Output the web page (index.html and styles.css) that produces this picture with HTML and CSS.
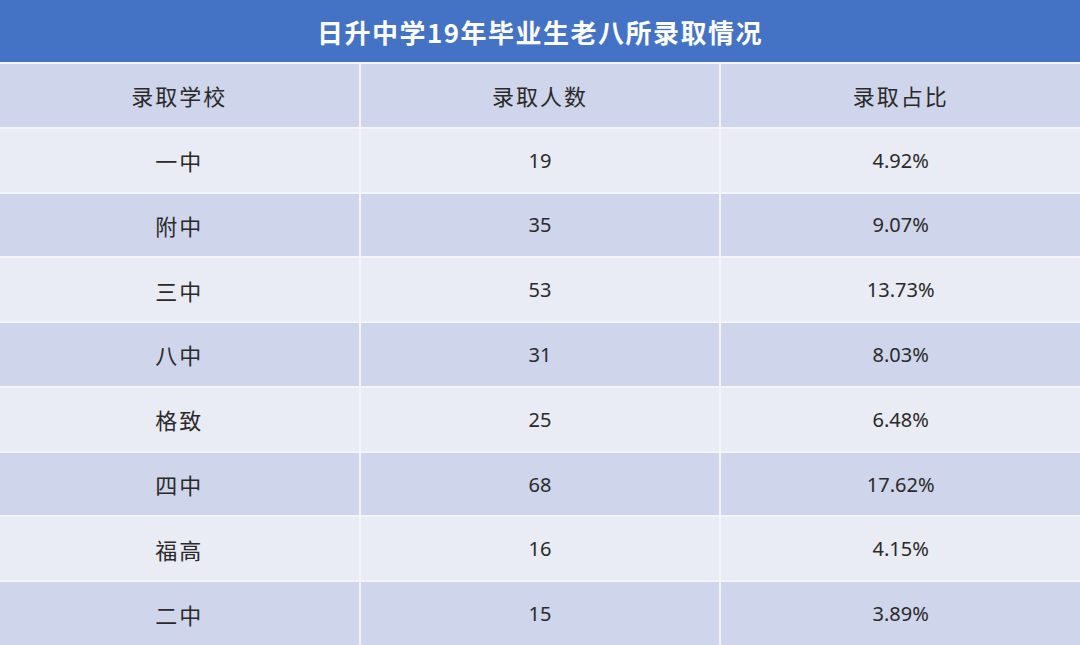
FILE: index.html
```html
<!DOCTYPE html>
<html lang="zh">
<head>
<meta charset="utf-8">
<title>日升中学19年毕业生老八所录取情况</title>
<link rel="stylesheet" href="styles.css">
</head>
<body>
<div class="sheet">
  <div class="title">日升中学19年毕业生老八所录取情况</div>
  <div class="grid">
    <div class="cell head cjk">录取学校</div><div class="cell head cjk">录取人数</div><div class="cell head cjk">录取占比</div>
    <div class="cell light cjk">一中</div><div class="cell light">19</div><div class="cell light">4.92%</div>
    <div class="cell dark cjk">附中</div><div class="cell dark">35</div><div class="cell dark">9.07%</div>
    <div class="cell light cjk">三中</div><div class="cell light">53</div><div class="cell light">13.73%</div>
    <div class="cell dark cjk">八中</div><div class="cell dark">31</div><div class="cell dark">8.03%</div>
    <div class="cell light cjk">格致</div><div class="cell light">25</div><div class="cell light">6.48%</div>
    <div class="cell dark cjk">四中</div><div class="cell dark">68</div><div class="cell dark">17.62%</div>
    <div class="cell light cjk">福高</div><div class="cell light">16</div><div class="cell light">4.15%</div>
    <div class="cell dark cjk">二中</div><div class="cell dark">15</div><div class="cell dark">3.89%</div>
  </div>
</div>
</body>
</html>
```

FILE: styles.css
```css
html, body {
  margin: 0;
  padding: 0;
  background: #ffffff;
}

.sheet {
  width: 1080px;
  height: 645px;
  display: flex;
  flex-direction: column;
  font-family: "Noto Sans", "Noto Sans CJK SC", sans-serif;
  color: #2a2a2a;
}

.title {
  height: 62px;
  flex: none;
  background: #4472c4;
  color: #ffffff;
  font-family: "Noto Sans CJK SC", sans-serif;
  font-weight: 700;
  font-size: 26px;
  letter-spacing: 1.5px;
  display: flex;
  align-items: center;
  justify-content: center;
}

.grid {
  flex: 1;
  display: grid;
  grid-template-columns: repeat(3, 1fr);
  grid-template-rows: repeat(9, 1fr);
  gap: 2px;
  padding-top: 2px;
  background: #f4f5fb;
}

.cell {
  display: flex;
  align-items: center;
  justify-content: center;
  font-size: 20px;
}

.cjk {
  font-size: 22px;
  letter-spacing: 2px;
}

.head,
.dark {
  background: #cfd5ea;
}

.light {
  background: #e9ebf5;
}
```
